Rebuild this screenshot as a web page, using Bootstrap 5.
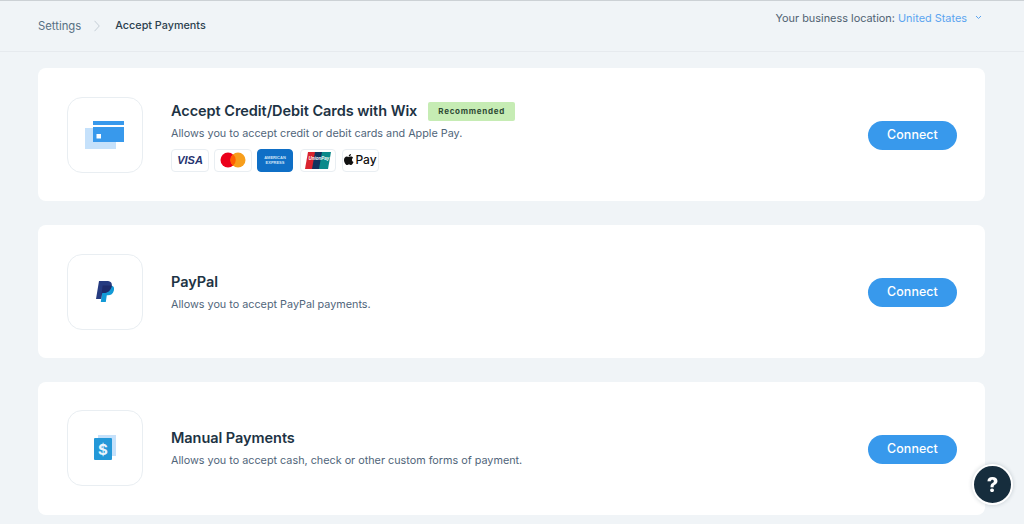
<!DOCTYPE html>
<html lang="en"><head><meta charset="utf-8"><title>Accept Payments</title>
<link href="https://cdn.jsdelivr.net/npm/bootstrap@5.3.0/dist/css/bootstrap.min.css" rel="stylesheet">
<style>
html,body{height:524px;overflow:hidden}
body{background:#f0f4f7;font-family:Inter,"Open Sans",sans-serif;color:#162d3d;border-top:1px solid #ccd1d5}
.topbar{height:51px;border-bottom:1px solid #e6eaee;padding:0 38px;font-size:11px}
.crumb-a{color:#577083;font-size:11.3px}
.crumb-b{color:#2b3f4e;font-weight:500;font-size:10.8px}
.crumb-sep{margin:0 15px 0 13px}
.loc{color:#4f6272;margin:-16px 4px 0 0;font-size:10.9px}
.loc a{color:#5ba4f0;text-decoration:none}
.list-wrap{padding:16px 39px 0 38px;gap:24px}
.pay-card{height:133px;background:#fff;border-radius:8px;padding:0 28px 0 29px}
.logo-box{width:76px;height:76px;border:1px solid #e9eef2;border-radius:15px;margin-right:28px;flex:none}
.pay-body{padding-top:1px}
.pay-body.tall{padding-top:3px}
.lift .logo-box,.lift .pay-body{margin-bottom:2px}
.pay-title{font-size:14.5px;font-weight:600;color:#1d3344;line-height:20px;letter-spacing:-.05px}
.pay-desc{font-size:10.8px;color:#50657a;line-height:16px;margin-top:5px}
.rec{background:#c6ecb4;color:#2e4a34;font-size:8px;font-weight:700;letter-spacing:.72px;height:19px;border-radius:2px;padding:0 10px;margin-left:11px;margin-top:1px}
.brand{width:38px;height:23px;border:1px solid #e9eef2;border-radius:4px;background:#fff;flex:none}
.brand-row{margin-top:7px}
.brand-row .narrow{width:36px}
.brand-row .apple{width:37px}
.gap-mc{margin-left:5px}
.gap-am{margin-left:5px}
.gap-up{margin-left:7px}
.gap-ap{margin-left:6px}
.visa{font:italic 800 11px "Liberation Sans",sans-serif;color:#26336f}
.apay{font-size:12px;font-weight:500;color:#111;gap:1px}
.amex{background:#0f6fc6;border-color:#0f6fc6;color:#cfe4f7;font:700 4px/5px "Liberation Sans",sans-serif;text-align:center}
.cta{background:#3899ec;color:#fff;border:0;border-radius:15px;width:89px;height:29px;font-size:12.4px;font-weight:500;padding:0;letter-spacing:.1px;margin-top:2px}
.cta:hover{background:#3899ec;color:#fff}
.help{position:fixed;left:972px;top:464px;width:41px;height:41px;border-radius:50%;background:#162d3d;border:2px solid #fff;color:#fff;font-size:20px;font-weight:800;box-shadow:0 0 4px rgba(22,45,61,.2)}
</style></head><body>
<header class="topbar d-flex justify-content-between align-items-center">
<div class="d-flex align-items-center"><span class="crumb-a">Settings</span>
<svg class="crumb-sep" width="6" height="12" viewBox="0 0 6 12" fill="none" stroke="#c5ced6"><path d="M.5.8 5.300 6 .5 11.200"/></svg>
<span class="crumb-b">Accept Payments</span></div>
<div class="loc d-flex align-items-center"><span>Your business location:&nbsp;<a href="#">United States</a></span>
<svg class="ms-2" width="7" height="5" viewBox="0 0 7 5" fill="none" stroke="#5ba4f0"><path d="M1 1 3.500 3.500 6 1"/></svg></div>
</header>
<main class="list-wrap d-flex flex-column">
<section class="pay-card d-flex align-items-center">
<div class="logo-box d-flex align-items-center justify-content-center">
<svg width="40" height="28" viewBox="0 0 40 28"><rect x="0" y="7" width="31" height="21" fill="#c5e1fb"/><path d="M8 0h31v4H8z" fill="#3899ec"/><path d="M8 6h31v15H8z" fill="#3899ec"/><rect x="11.500" y="13" width="4.500" height="4.500" fill="#fff"/></svg>
</div>
<div class="pay-body tall flex-grow-1">
<div class="d-flex align-items-center"><span class="pay-title">Accept Credit/Debit Cards with Wix</span><span class="rec d-inline-flex align-items-center">Recommended</span></div>
<div class="pay-desc">Allows you to accept credit or debit cards and Apple Pay.</div>
<div class="brand-row d-flex">
<div class="brand visa d-flex align-items-center justify-content-center">VISA</div>
<div class="brand gap-mc d-flex align-items-center justify-content-center"><svg width="26" height="16" viewBox="0 0 26 16"><circle cx="8" cy="8" r="7.500" fill="#eb001b"/><circle cx="18" cy="8" r="7.500" fill="#f79e1b"/><path d="M13 2.200a7.500 7.500 0 0 1 0 11.600 7.500 7.500 0 0 1 0-11.600z" fill="#ff5f00"/></svg></div>
<div class="brand narrow gap-am amex d-flex flex-column align-items-center justify-content-center"><span>AMERICAN</span><span>EXPRESS</span></div>
<div class="brand narrow gap-up d-flex align-items-center justify-content-center"><svg width="26" height="17" viewBox="0 0 26 17"><path d="M3 0h9L9 17H0z" fill="#d9232e"/><path d="M10 0h9l-3 17H7z" fill="#10335f"/><path d="M17 0h9l-3 17h-9z" fill="#0a8a8a"/><text x="14" y="8" font-size="4.500" font-style="italic" font-weight="700" fill="#fff" text-anchor="middle" font-family="Liberation Sans">UnionPay</text></svg></div>
<div class="brand apple gap-ap apay d-flex align-items-center justify-content-center"><svg width="10" height="12" viewBox="0 0 10 12"><path d="M7 0c0 1.300-1 2.500-2.300 2.400C4.600 1.200 5.700.1 7 0zM4.700 3c.6 0 1.200-.5 2.200-.5.800 0 1.700.4 2.200 1.200-1.800 1.100-1.500 3.500.4 4.300-.5 1.300-1.500 3-2.500 3-.8 0-1-.5-2-.5s-1.300.5-2 .5C1.700 11 0 8.300 0 6c0-2.200 1.400-3.400 2.800-3.400.8 0 1.400.4 1.900.4z" fill="#111"/></svg><span>Pay</span></div>
</div></div>
<button class="btn cta" type="button">Connect</button>
</section>
<section class="pay-card d-flex align-items-center">
<div class="logo-box d-flex align-items-center justify-content-center">
<svg width="18" height="21" viewBox="0 0 18 21"><path d="M7 4.500h7.500c3.400 0 4 2.600 3.300 5.200-.8 3-2.900 4.600-5.800 4.600h-1.200L9.800 21H4.800z" fill="#139ad6"/><path d="M3 0h7.500c4 0 6 1.800 5.200 5.200-.9 4-3.900 6.800-7.700 6.800H6.200l-1.100 6H0z" fill="#263b80"/><path d="M6.600 4.500h9.200C15 8.800 12 11.700 8 12H6.200L5 18z" fill="#1f2c6b"/></svg>
</div>
<div class="pay-body flex-grow-1"><div class="pay-title">PayPal</div><div class="pay-desc">Allows you to accept PayPal payments.</div></div>
<button class="btn cta" type="button">Connect</button>
</section>
<section class="pay-card lift d-flex align-items-center">
<div class="logo-box d-flex align-items-center justify-content-center">
<svg width="22" height="25" viewBox="0 0 22 25"><rect x="4" y="0" width="18" height="21" fill="#c5e1fb"/><rect x="0" y="3" width="18" height="22" rx="1" fill="#2398d8"/><text x="9" y="19.500" font-size="15" font-weight="700" fill="#e8f4fc" text-anchor="middle" font-family="Inter">$</text></svg>
</div>
<div class="pay-body flex-grow-1"><div class="pay-title">Manual Payments</div><div class="pay-desc">Allows you to accept cash, check or other custom forms of payment.</div></div>
<button class="btn cta" type="button">Connect</button>
</section>
</main>
<div class="help d-flex align-items-center justify-content-center">?</div>
</body></html>
